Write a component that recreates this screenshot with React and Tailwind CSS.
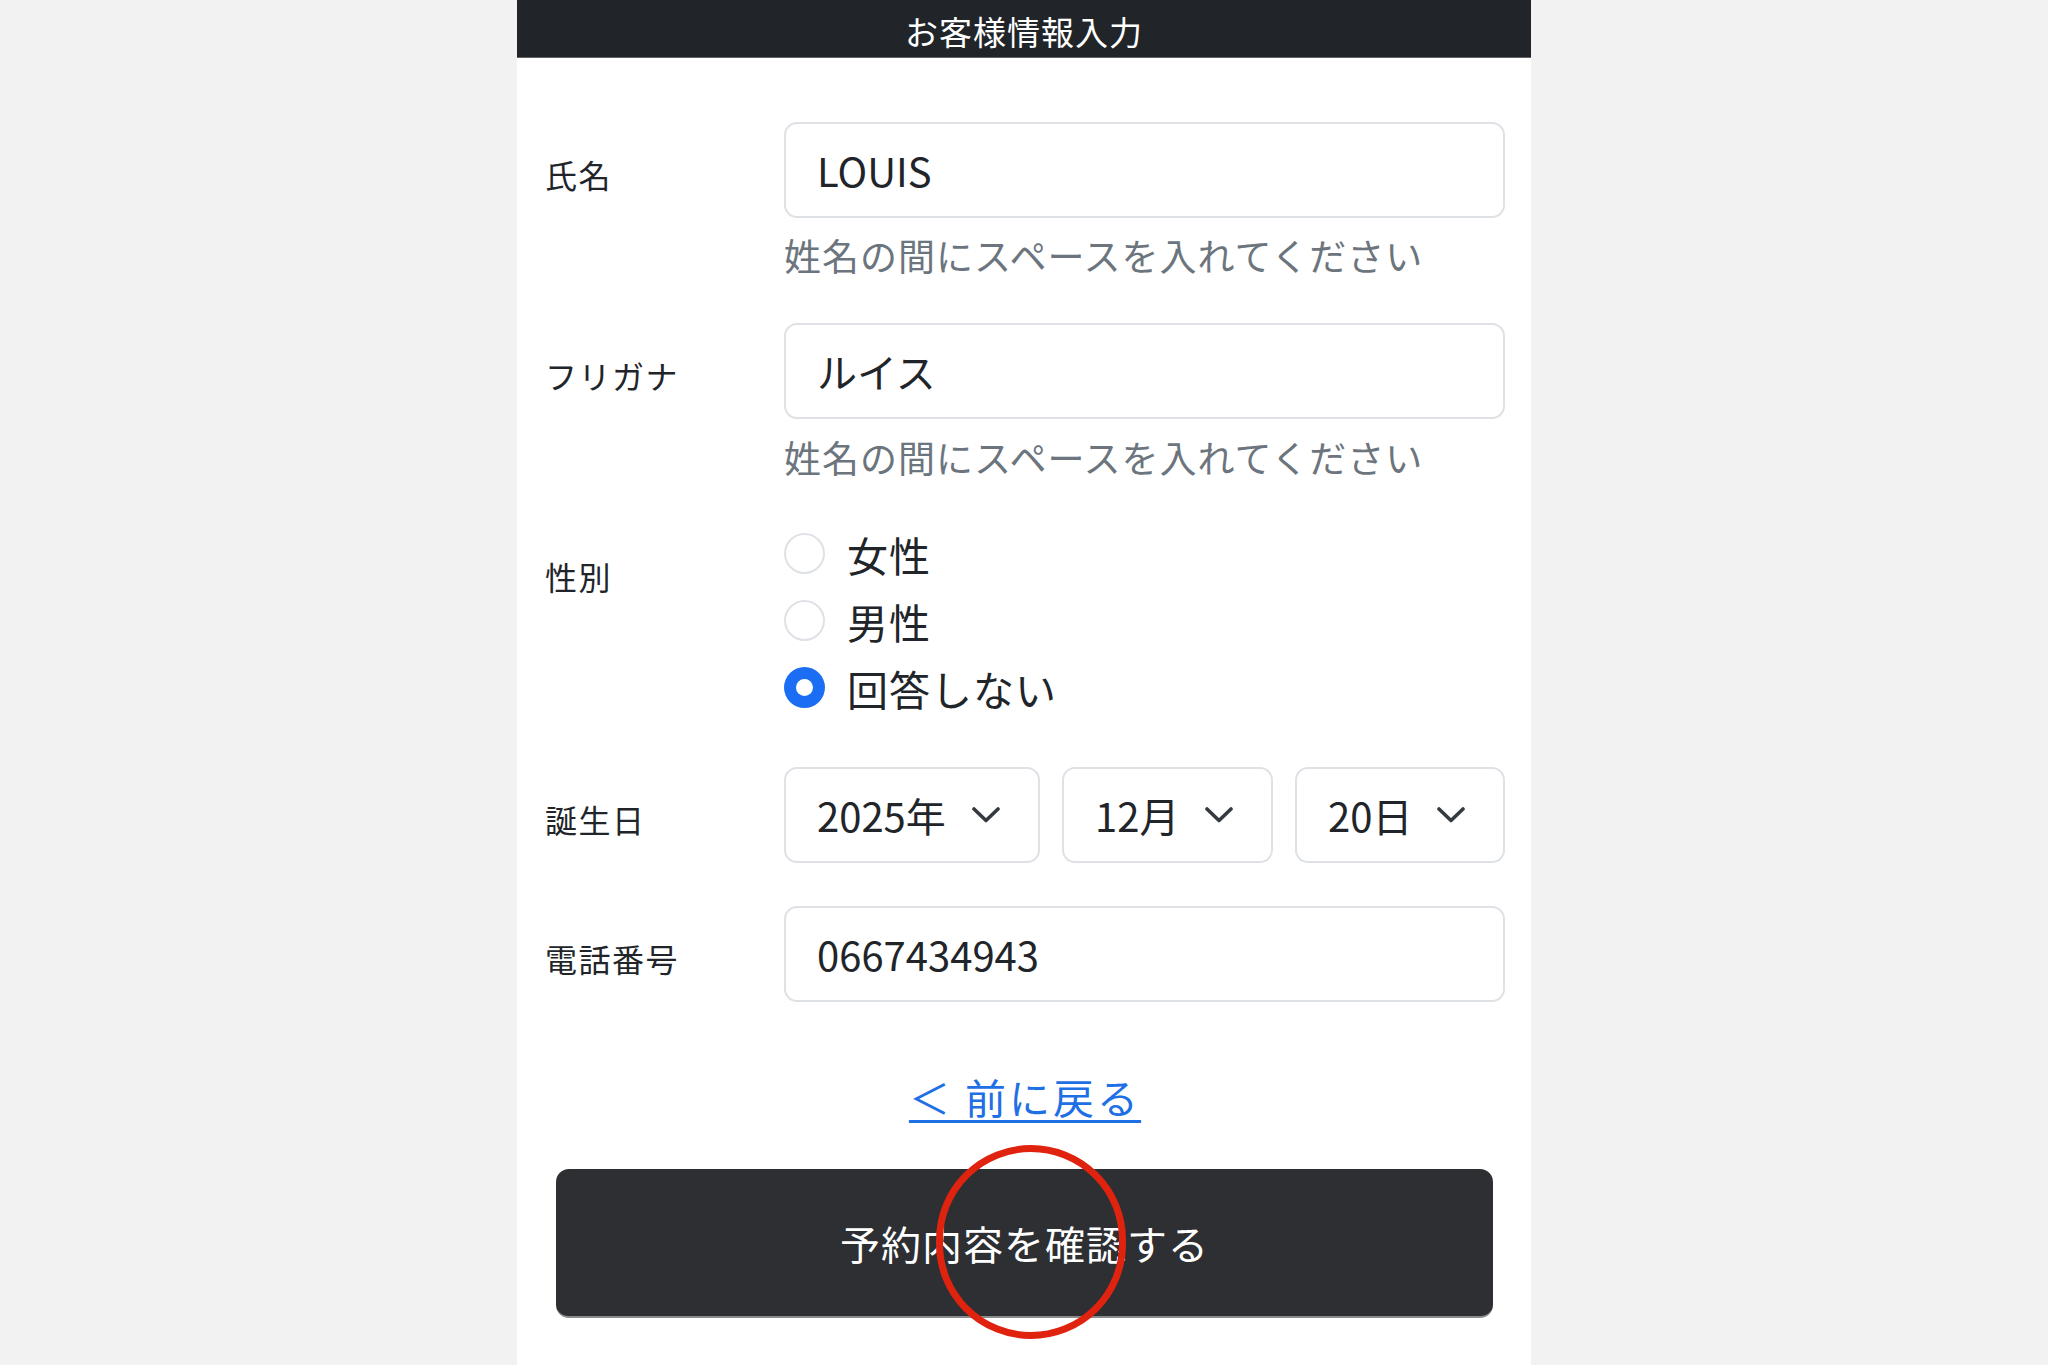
import React from "react";

const FONT = { fontFamily: '"Noto Sans CJK JP", "Noto Sans", sans-serif' };

function Label({ children, pt = "pt-[28px]" }) {
  return (
    <div className={`w-[239px] shrink-0 ${pt} text-[32px] leading-[48px] tracking-[1.5px] text-[#212529]`}>
      {children}
    </div>
  );
}

function TextBox({ value }) {
  return (
    <div className="h-[96px] rounded-[13px] border-2 border-[#dee2e6] bg-white pl-[31px] flex items-center text-[40px] text-[#212529]">
      {value}
    </div>
  );
}

function Hint({ className = "" }) {
  return (
    <div className={`text-[37px] leading-[48px] tracking-[1px] text-[#6c757d] whitespace-nowrap ${className}`}>
      姓名の間にスペースを入れてください
    </div>
  );
}

function Chevron() {
  return (
    <svg width="28" height="16" viewBox="0 0 28 16" fill="none">
      <path d="M2 2 L14 13.5 L26 2" stroke="#343a40" strokeWidth="3.6" strokeLinecap="round" strokeLinejoin="round" />
    </svg>
  );
}

function SelectBox({ value, className }) {
  return (
    <div className={`h-[96px] rounded-[13px] border-2 border-[#dee2e6] bg-white pl-[31px] pr-[38px] flex items-center justify-between text-[40px] text-[#212529] ${className}`}>
      <span>{value}</span>
      <Chevron />
    </div>
  );
}

function Radio({ label, checked }) {
  return (
    <div className="h-[67px] flex items-center gap-[22px]">
      {checked ? (
        <div className="w-[41px] h-[41px] rounded-full bg-[#1b6ef3] flex items-center justify-center shrink-0">
          <div className="w-[17px] h-[17px] rounded-full bg-white" />
        </div>
      ) : (
        <div className="w-[41px] h-[41px] rounded-full border-2 border-[#dee2e6] bg-white shrink-0" />
      )}
      <span className="text-[41px] leading-[52px] tracking-[1px] text-[#212529]">{label}</span>
    </div>
  );
}

export default function App() {
  return (
    <div className="min-h-[1365px] bg-[#f2f2f2] flex justify-center" style={FONT}>
      <div className="w-[1014px] min-h-[1365px] bg-white">
        <header className="h-[58px] bg-[#212529] border-b border-[#5f6366] flex items-center justify-center pt-[7px] text-white text-[33px] tracking-[1px]">
          お客様情報入力
        </header>

        <div className="pl-[28px] pr-[26px] pt-[64px] pb-[40px]">
          {/* 氏名 */}
          <div className="flex items-start">
            <Label>氏名</Label>
            <div className="flex-1">
              <TextBox value="LOUIS" />
              <Hint className="mt-[13px]" />
            </div>
          </div>

          {/* フリガナ */}
          <div className="flex items-start mt-[44px]">
            <Label>フリガナ</Label>
            <div className="flex-1">
              <TextBox value="ルイス" />
              <Hint className="mt-[14px]" />
            </div>
          </div>

          {/* 性別 */}
          <div className="flex items-start mt-[39px]">
            <Label pt="pt-[32px]">性別</Label>
            <div className="flex-1 flex flex-col">
              <Radio label="女性" />
              <Radio label="男性" />
              <Radio label="回答しない" checked />
            </div>
          </div>

          {/* 誕生日 */}
          <div className="flex items-start mt-[46px]">
            <Label>誕生日</Label>
            <div className="flex-1 flex gap-[22px]">
              <SelectBox value="2025年" className="w-[256px]" />
              <SelectBox value="12月" className="w-[211px]" />
              <SelectBox value="20日" className="w-[210px]" />
            </div>
          </div>

          {/* 電話番号 */}
          <div className="flex items-start mt-[43px]">
            <Label>電話番号</Label>
            <div className="flex-1">
              <TextBox value="0667434943" />
            </div>
          </div>

          {/* 前に戻る */}
          <div className="mt-[68px] flex justify-center">
            <a href="#" className="text-[41px] leading-[52px] tracking-[3px] text-[#1f6fe5] underline underline-offset-[6px] decoration-[3px]">
              ＜ 前に戻る
            </a>
          </div>

          {/* 確認ボタン */}
          <div className="relative mt-[47px] ml-[11px] mr-[12px]">
            <button className="w-full h-[149px] rounded-[13px] bg-[#2e2f33] border-b-2 border-[#8a8b8e] text-white text-[40px] tracking-[1px] flex items-center justify-center">
              予約内容を確認する
            </button>
            <div className="absolute left-[380px] top-[-24px] w-[190px] h-[194px] rounded-full border-[7px] border-[#e0230e] pointer-events-none" />
          </div>
        </div>
      </div>
    </div>
  );
}
